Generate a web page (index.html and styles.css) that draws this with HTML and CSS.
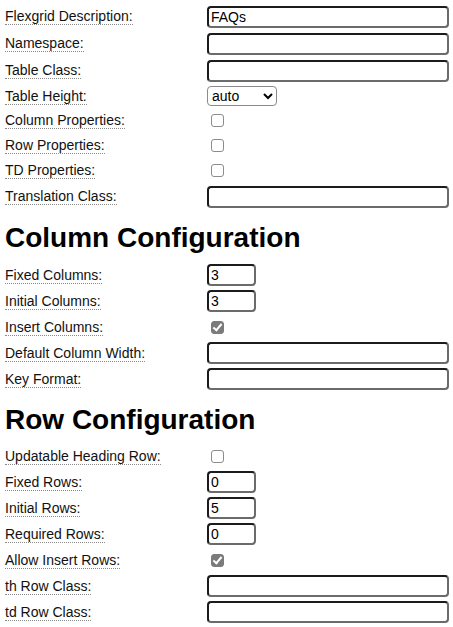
FILE: index.html
```html
<!DOCTYPE html>
<html lang="en">
<head>
    <meta charset="UTF-8">
    <meta name="viewport" content="width=device-width, initial-scale=1.0">
    <title>Flexgrid Settings</title>
    <link rel="stylesheet" href="styles.css">
</head>
<body>
    <div class="form form-main">
        <div class="row"><label>Flexgrid Description:</label><input type="text" class="text" value="FAQs"></div>
        <div class="row"><label>Namespace:</label><input type="text" class="text"></div>
        <div class="row"><label>Table Class:</label><input type="text" class="text"></div>
        <div class="row pick"><label>Table Height:</label>
            <select class="choice">
                <option>auto</option>
                <option>fixed</option>
            </select>
        </div>
        <div class="row check"><label>Column Properties:</label><input type="checkbox" class="tick" disabled></div>
        <div class="row check"><label>Row Properties:</label><input type="checkbox" class="tick" disabled></div>
        <div class="row check"><label>TD Properties:</label><input type="checkbox" class="tick" disabled></div>
        <div class="row"><label>Translation Class:</label><input type="text" class="text"></div>
    </div>

    <h1>Column Configuration</h1>
    <div class="form">
        <div class="row"><label>Fixed Columns:</label><input type="text" class="text num" value="3"></div>
        <div class="row"><label>Initial Columns:</label><input type="text" class="text num" value="3"></div>
        <div class="row"><label>Insert Columns:</label><input type="checkbox" class="tick" checked disabled></div>
        <div class="row"><label>Default Column Width:</label><input type="text" class="text"></div>
        <div class="row"><label>Key Format:</label><input type="text" class="text"></div>
    </div>

    <h1>Row Configuration</h1>
    <div class="form">
        <div class="row check"><label>Updatable Heading Row:</label><input type="checkbox" class="tick" disabled></div>
        <div class="row"><label>Fixed Rows:</label><input type="text" class="text num" value="0"></div>
        <div class="row"><label>Initial Rows:</label><input type="text" class="text num" value="5"></div>
        <div class="row"><label>Required Rows:</label><input type="text" class="text num" value="0"></div>
        <div class="row"><label>Allow Insert Rows:</label><input type="checkbox" class="tick" checked disabled></div>
        <div class="row"><label>th Row Class:</label><input type="text" class="text"></div>
        <div class="row"><label>td Row Class:</label><input type="text" class="text"></div>
    </div>
</body>
</html>
```

FILE: styles.css
```css
body {
    margin: 0;
    font-family: 'Liberation Sans', Arial, sans-serif;
    font-size: 14px;
    color: #000;
    background: #fff;
}
.form {
    padding: 0 4px 0 5px;
}
.form-main {
    padding-top: 3px;
}
.row {
    display: grid;
    grid-template-columns: 202px 1fr;
    align-items: center;
    justify-items: start;
    height: 26px;
}
.form-main .row {
    height: 27px;
}
.form-main .row.pick {
    height: 24px;
}
.row.check,
.form-main .row.check {
    height: 25px;
}
label {
    line-height: 16px;
    color: #111;
    border-bottom: 1px dotted #8a8a8a;
}
.text {
    box-sizing: border-box;
    width: 100%;
    height: 22px;
    margin: 0;
    padding: 1px 2px;
    font-family: 'Liberation Sans', Arial, sans-serif;
    font-size: 14px;
    color: #000;
    background: #fff;
    border: 2px solid;
    border-color: #1b1b1b #6b6b6b #6b6b6b #1b1b1b;
    border-radius: 4px;
    outline: none;
}
.text.num {
    width: 49px;
}
.choice {
    width: 70px;
    height: 20px;
    margin: 0;
    font-family: 'Liberation Sans', Arial, sans-serif;
    font-size: 14px;
    color: #000;
    border: 1px solid #8a8a8a;
    border-radius: 4px;
    background: #fff;
}
.tick {
    appearance: none;
    -webkit-appearance: none;
    position: relative;
    box-sizing: border-box;
    width: 13px;
    height: 13px;
    margin: 3px 3px 3px 4px;
    border: 1px solid #8c8c8c;
    border-radius: 3px;
    background: #fff;
}
.tick:checked {
    background: #7b7b7b;
    border-color: #7b7b7b;
}
.tick:checked::after {
    content: "";
    position: absolute;
    left: 3px;
    top: 0px;
    width: 3px;
    height: 7px;
    border: solid #fff;
    border-width: 0 2px 2px 0;
    transform: rotate(40deg);
}
h1 {
    margin: 12px 0 8px 5px;
    font-size: 28px;
    line-height: 32px;
    font-weight: bold;
}
```
